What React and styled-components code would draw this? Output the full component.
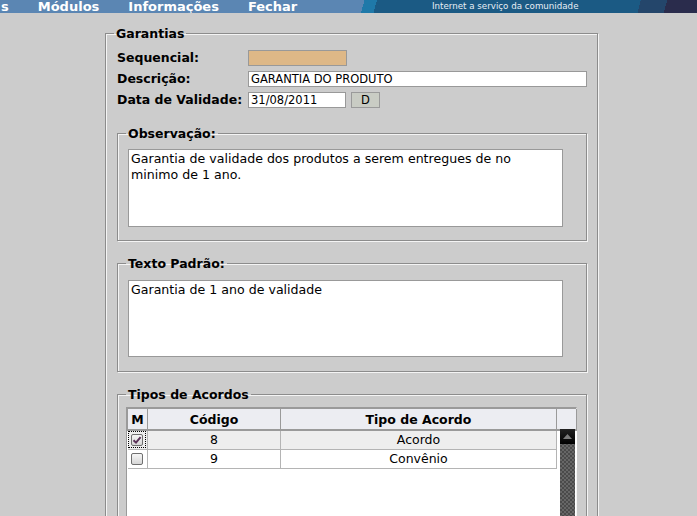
import React from "react";
import styled, { createGlobalStyle } from "styled-components";

const Global = createGlobalStyle`
  html, body { margin: 0; padding: 0; background: #cccccc; }
  body { font-family: "DejaVu Sans", Verdana, sans-serif; color: #000; }
  * { box-sizing: border-box; }
`;

const Page = styled.div`
  width: 697px;
  height: 516px;
  overflow: hidden;
  background: #cccccc;
`;

const TopBar = styled.div`
  display: flex;
  height: 13px;
  overflow: hidden;
`;

const Menu = styled.nav`
  display: flex;
  align-items: center;
  gap: 29px;
  width: 350px;
  padding-left: 1px;
  background: #5b86b3;
`;

const MenuItem = styled.span`
  color: #fff;
  font-weight: bold;
  font-size: 13px;
  line-height: 13px;
  white-space: nowrap;
`;

const Banner = styled.div`
  flex: 1;
  display: flex;
  align-items: center;
  padding-left: 82px;
  background: linear-gradient(
    105deg,
    #5b86b3 0 14px,
    #1f79a9 14px 26px,
    #1b5a84 26px 83%,
    #24466b 83% 90.5%,
    #2a2c4c 90.5%
  );
`;

const Slogan = styled.span`
  color: #e8eef5;
  font-size: 8.7px;
  line-height: 13px;
  white-space: nowrap;
`;

const Content = styled.div`
  padding: 13px 0 0 105px;
`;

const Group = styled.fieldset`
  margin: 0;
  width: ${(p) => p.$w}px;
  padding: ${(p) => p.$pad};
  border: 1px solid #8c8c8c;
  box-shadow: inset 1px 1px 0 #f4f4f4, 1px 1px 0 #f4f4f4;
  min-width: 0;
  & + & { margin-top: 15px; }
`;

const Legend = styled.legend`
  margin-left: ${(p) => p.$indent}px;
  padding: 0 2px;
  font-weight: bold;
  font-size: 12.5px;
  line-height: 15px;
`;

const FormGrid = styled.div`
  display: grid;
  grid-template-columns: 131px auto;
  grid-auto-rows: 21px;
  align-items: center;
  margin: 6px 0 16px;
`;

const Label = styled.label`
  font-weight: bold;
  font-size: 12.5px;
  white-space: nowrap;
`;

const FieldRow = styled.div`
  display: flex;
  align-items: center;
  gap: 5px;
`;

const Input = styled.div`
  width: ${(p) => p.$w}px;
  height: 16px;
  border: 1px solid #999;
  background: ${(p) => p.$bg || "#fff"};
  font-size: 11.5px;
  line-height: 14px;
  padding-left: 2px;
  white-space: nowrap;
  overflow: hidden;
`;

const SmallButton = styled.button`
  width: 29px;
  height: 16px;
  margin: 0;
  padding: 0;
  border: 1px solid #9a9a9a;
  background: #c9ccc4;
  font-family: "DejaVu Sans", sans-serif;
  font-size: 11.5px;
  line-height: 14px;
  color: #000;
`;

const TextArea = styled.div`
  width: 435px;
  height: ${(p) => p.$h}px;
  border: 1px solid #999;
  background: #fff;
  padding: 1px 2px;
  font-size: 12.6px;
  line-height: 16px;
`;

const TableBox = styled.div`
  position: relative;
  width: 451px;
  height: 120px;
  background: #fff;
  border-top: 2px solid #9a9a9a;
  border-left: 1px solid #9a9a9a;
  border-right: 1px solid #f4f4f4;
`;

const Table = styled.table`
  border-collapse: collapse;
  table-layout: fixed;
  width: 449px;
  font-size: 12.5px;
`;

const Th = styled.th`
  width: ${(p) => p.$w}px;
  height: 21px;
  padding: 0;
  background: #ecedf2;
  border: 1px solid #9a9a9a;
  border-top: none;
  border-bottom-width: 2px;
  font-size: 12.5px;
  font-weight: bold;
  text-align: center;
`;

const Td = styled.td`
  height: 19px;
  padding: 0;
  border: 1px solid #b4b4b4;
  border-top: none;
  border-left: none;
  text-align: center;
  background: ${(p) => (p.$alt ? "#eeeeee" : "#fff")};
`;

const EmptyTd = styled.td`
  padding: 0;
  border: none;
  background: #fff;
`;

const CheckWrap = styled.span`
  display: inline-flex;
  align-items: center;
  justify-content: center;
  width: 18px;
  height: 17px;
  vertical-align: middle;
  border: 1px dotted ${(p) => (p.$focus ? "#000" : "transparent")};
`;

const Box = styled.span`
  display: inline-flex;
  align-items: center;
  justify-content: center;
  width: 12px;
  height: 12px;
  border: 1px solid #6f6f6f;
  border-radius: 2px;
  background: linear-gradient(#f6f6f6, #d6d6d6);
`;

const Scrollbar = styled.div`
  position: absolute;
  top: 20px;
  right: 1px;
  width: 15px;
  bottom: 0;
  background-color: #4a4a4a;
  background-image:
    linear-gradient(45deg, #666 25%, transparent 25%, transparent 75%, #666 75%),
    linear-gradient(45deg, #666 25%, transparent 25%, transparent 75%, #666 75%);
  background-size: 4px 4px;
  background-position: 0 0, 2px 2px;
`;

const ScrollUp = styled.div`
  height: 15px;
  background: linear-gradient(#222, #000);
  display: flex;
  align-items: center;
  justify-content: center;
`;

function Check({ checked, focus }) {
  return (
    <CheckWrap $focus={focus}>
      <Box>
        {checked && (
          <svg width="10" height="10" viewBox="0 0 10 10">
            <path d="M1.5 5.2 L4 7.6 L8.6 2.2" fill="none" stroke="#5a3258" strokeWidth="2" />
          </svg>
        )}
      </Box>
    </CheckWrap>
  );
}

const rows = [
  { code: "8", tipo: "Acordo", checked: true },
  { code: "9", tipo: "Convênio", checked: false },
];

export default function App() {
  return (
    <Page>
      <Global />
      <TopBar>
        <Menu>
          <MenuItem>s</MenuItem>
          <MenuItem>Módulos</MenuItem>
          <MenuItem>Informações</MenuItem>
          <MenuItem>Fechar</MenuItem>
        </Menu>
        <Banner>
          <Slogan>Internet a serviço da comunidade</Slogan>
        </Banner>
      </TopBar>
      <Content>
        <Group $w={493} $pad="0 9px 40px 11px">
          <Legend $indent={-3}>Garantias</Legend>
          <FormGrid>
            <Label>Sequencial:</Label>
            <Input $w={99} $bg="#deb887" />
            <Label>Descrição:</Label>
            <Input $w={339}>GARANTIA DO PRODUTO</Input>
            <Label>Data de Validade:</Label>
            <FieldRow>
              <Input $w={98}>31/08/2011</Input>
              <SmallButton>D</SmallButton>
            </FieldRow>
          </FormGrid>

          <Group $w={470} $pad="8px 9px 13px 10px">
            <Legend $indent={-2}>Observação:</Legend>
            <TextArea $h={78}>
              Garantia de validade dos produtos a serem entregues de no minimo de 1 ano.
            </TextArea>
          </Group>

          <Group $w={470} $pad="9px 9px 14px 10px">
            <Legend $indent={-2}>Texto Padrão:</Legend>
            <TextArea $h={77}>Garantia de 1 ano de validade</TextArea>
          </Group>

          <Group $w={470} $pad="5px 9px 15px 8px">
            <Legend $indent={0}>Tipos de Acordos</Legend>
            <TableBox>
              <Table>
                <thead>
                  <tr>
                    <Th $w={20}>M</Th>
                    <Th $w={133}>Código</Th>
                    <Th $w={276}>Tipo de Acordo</Th>
                    <Th $w={20}></Th>
                  </tr>
                </thead>
                <tbody>
                  {rows.map((r, i) => (
                    <tr key={r.code}>
                      <Td $alt={i === 0}>
                        <Check checked={r.checked} focus={i === 0} />
                      </Td>
                      <Td $alt={i === 0}>{r.code}</Td>
                      <Td $alt={i === 0}>{r.tipo}</Td>
                      <EmptyTd />
                    </tr>
                  ))}
                </tbody>
              </Table>
              <Scrollbar>
                <ScrollUp>
                  <svg width="9" height="5" viewBox="0 0 9 5">
                    <path d="M0 5 L4.5 0 L9 5 Z" fill="#7a7a7a" />
                  </svg>
                </ScrollUp>
              </Scrollbar>
            </TableBox>
          </Group>
        </Group>
      </Content>
    </Page>
  );
}
